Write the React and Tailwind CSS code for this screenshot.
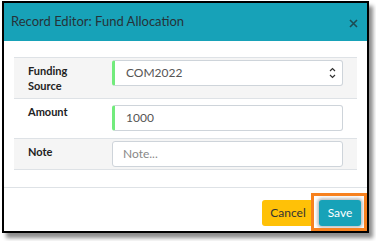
import React from 'react';

const font = { fontFamily: 'Lato, "Open Sans", "Liberation Sans", sans-serif' };

const Row = ({ label, children, shaded, h, pt }) => (
  <div className={`flex border-t border-[#dee2e6] ${h} ${shaded ? 'bg-[#f5f5f5]' : 'bg-white'}`}>
    <div className="w-[98px] shrink-0 pl-[14px] pt-[5px] text-[11px] font-bold leading-[15px] text-[#222]">
      {label}
    </div>
    <div className={`flex-1 pr-[14px] ${pt}`}>{children}</div>
  </div>
);

export default function App() {
  return (
    <div className="relative h-[241px] w-[376px] overflow-hidden bg-white" style={font}>
      <div className="ml-[2px] mt-[1px] flex h-[232px] w-[367px] flex-col border-2 border-black bg-white shadow-[4px_5px_4px_rgba(0,0,0,0.45)]">
        {/* header */}
        <div className="flex h-[38px] shrink-0 items-center justify-between bg-[#17a2b8] pl-[7px] pr-[9px]">
          <span className="text-[13px] text-[#263238]">Record Editor: Fund Allocation</span>
          <svg width="9" height="9" viewBox="0 0 9 9" className="mt-[2px]">
            <path d="M1 1L8 8M8 1L1 8" stroke="#1d4b52" strokeWidth="1.6" />
          </svg>
        </div>

        {/* body */}
        <div className="px-[10px] pt-[16px] pb-[17px]">
          <div className="border-b border-[#dee2e6]">
            <Row label={<>Funding<br />Source</>} shaded h="h-[41px]" pt="pt-[2px]">
              <div className="flex h-[26px] items-center justify-between rounded-[3px] border border-[#ced4da] border-l-[3px] border-l-[#72eb7c] bg-white pl-[11px] pr-[6px] text-[12px] text-[#555]">
                <span>COM2022</span>
                <svg width="7" height="14" viewBox="0 0 7 14">
                  <path d="M1 5L3.5 2.5L6 5M1 9L3.5 11.5L6 9" fill="none" stroke="#333" strokeWidth="1.2" />
                </svg>
              </div>
            </Row>
            <Row label="Amount" h="h-[40px]" pt="pt-[6px]">
              <div className="flex h-[26px] items-end rounded-[3px] border border-[#ced4da] border-l-[3px] border-l-[#72eb7c] bg-white pb-[3px] pl-[11px] text-[12px] text-[#555]">
                1000
              </div>
            </Row>
            <Row label="Note" shaded h="h-[31px]" pt="pt-[2px]">
              <div className="flex h-[26px] items-center rounded-[3px] border border-[#ced4da] bg-white pl-[10px] text-[12px] text-[#888]">
                Note...
              </div>
            </Row>
          </div>
        </div>

        {/* footer */}
        <div className="flex flex-1 items-start justify-end gap-[5px] border-t border-[#dee2e6] pr-[6px] pt-[12px]">
          <button className="h-[26px] w-[52px] rounded-[3px] bg-[#ffc107] text-[12px] text-[#333]">Cancel</button>
          <button className="h-[26px] w-[42px] rounded-[3px] bg-[#17a2b8] text-[12px] text-white shadow-[0_0_3px_2px_rgba(120,120,120,0.45)]">
            Save
          </button>
        </div>
      </div>

      {/* annotation highlight */}
      <div className="absolute left-[311px] top-[193px] h-[38px] w-[56px] border-[3px] border-[#f7821f]" />
    </div>
  );
}
